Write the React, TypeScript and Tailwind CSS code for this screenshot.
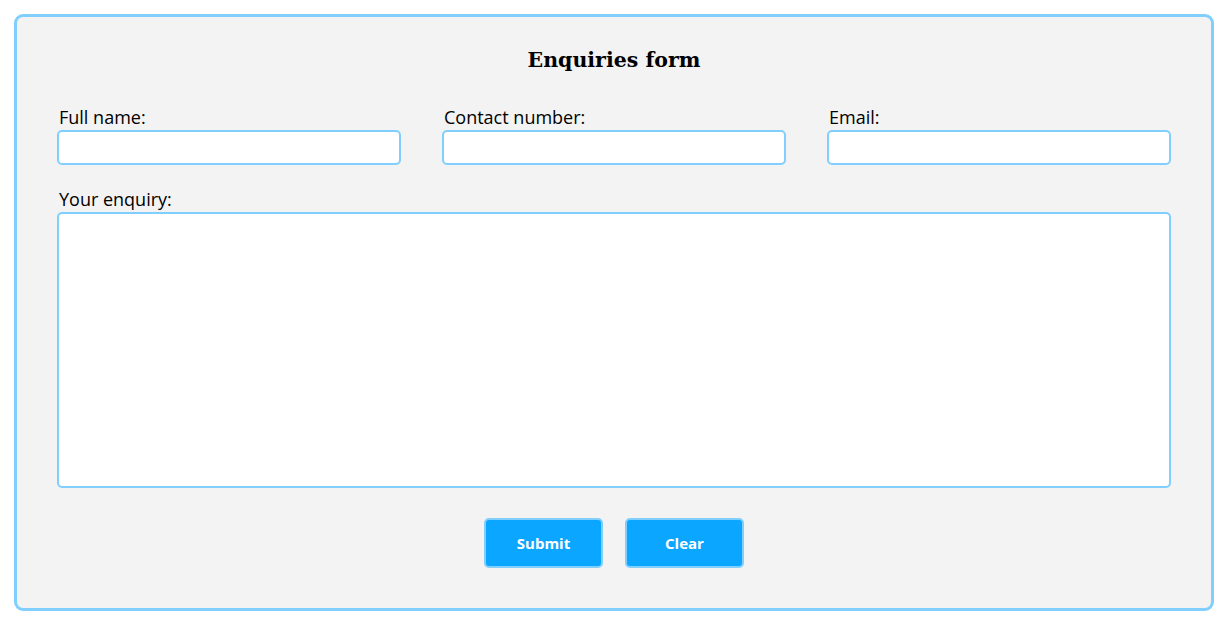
export default function App() {
  const labelCls = "block h-[24px] pl-[2px] text-[18px] leading-[24px] text-black";
  const inputCls =
    "mt-[1px] block h-[35px] w-full rounded-[5px] border-2 border-[#80cfff] bg-white px-2 outline-none";
  const buttonCls =
    "h-[50px] w-[119px] rounded-[5px] border-2 border-[#80cfff] bg-[#0aa6ff] text-[15px] font-bold text-white";

  return (
    <div className="min-h-screen bg-white pt-[14px] font-['Open_Sans',sans-serif]">
      <form className="mx-[14px] h-[597px] rounded-[9px] border-[3px] border-[#80cfff] bg-[#f3f3f3] px-[40px] pt-[27px]">
        <h1 className="h-[32px] text-center font-['DejaVu_Serif',serif] text-[20.5px] font-bold leading-[32px] text-black">
          Enquiries form
        </h1>

        <div className="mt-[29px] grid grid-cols-3 gap-x-[41px]">
          <div>
            <label className={labelCls}>Full name:</label>
            <input type="text" className={inputCls} />
          </div>
          <div>
            <label className={labelCls}>Contact number:</label>
            <input type="text" className={inputCls} />
          </div>
          <div>
            <label className={labelCls}>Email:</label>
            <input type="email" className={inputCls} />
          </div>
        </div>

        <div className="mt-[22px]">
          <label className={labelCls}>Your enquiry:</label>
          <textarea className="mt-[1px] block h-[276px] w-full resize-none rounded-[5px] border-2 border-[#80cfff] bg-white p-2 outline-none" />
        </div>

        <div className="mt-[30px] flex justify-center gap-[22px]">
          <button type="submit" className={buttonCls}>
            Submit
          </button>
          <button type="reset" className={buttonCls}>
            Clear
          </button>
        </div>
      </form>
    </div>
  );
}
